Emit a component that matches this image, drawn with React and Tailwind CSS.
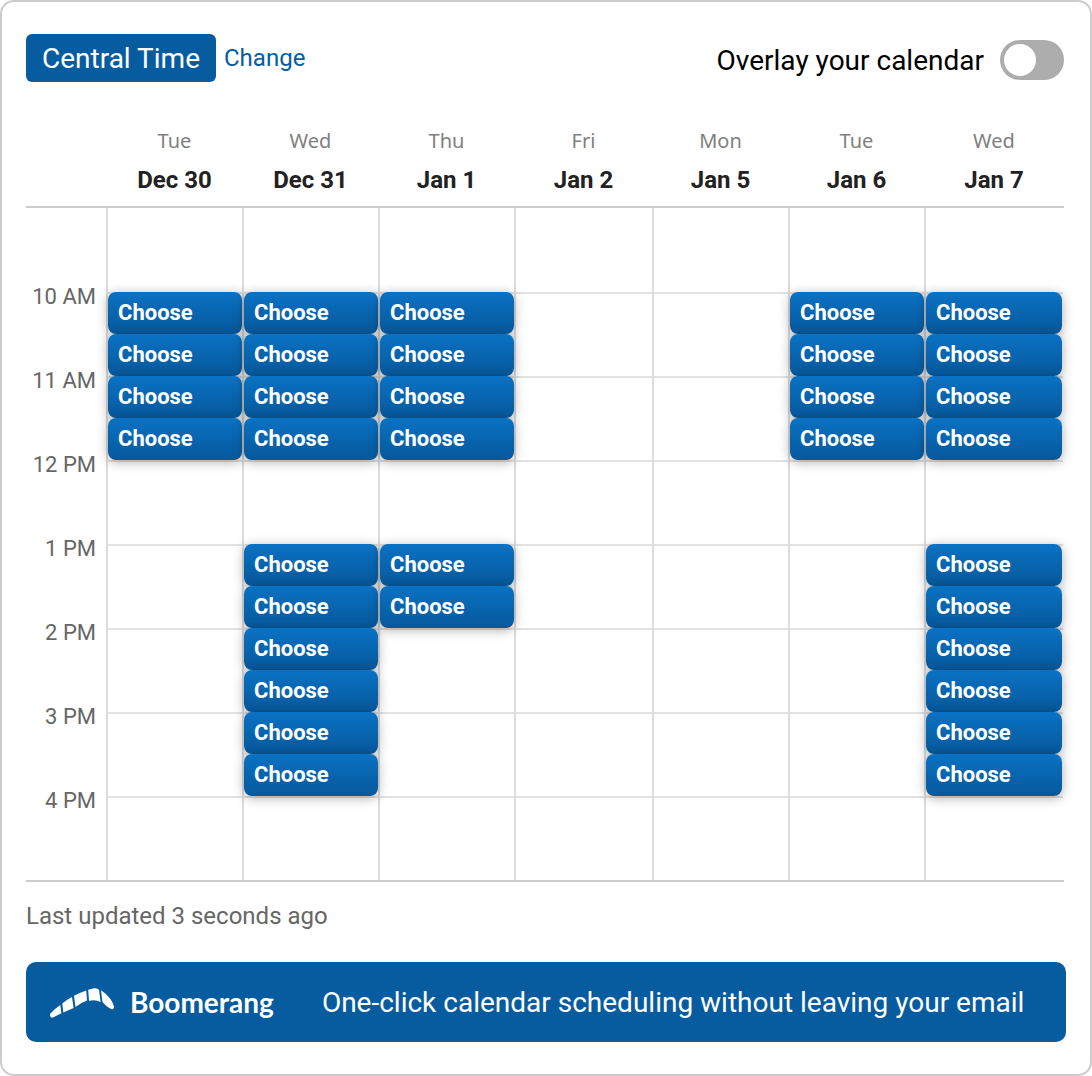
const days = [
  { name: "Tue", date: "Dec 30", slots: [2, 3, 4, 5], w: "w-[136px]", btn: "w-[134px]" },
  { name: "Wed", date: "Dec 31", slots: [2, 3, 4, 5, 8, 9, 10, 11, 12, 13], w: "w-[136px]", btn: "w-[134px]" },
  { name: "Thu", date: "Jan 1", slots: [2, 3, 4, 5, 8, 9], w: "w-[136px]", btn: "w-[134px]" },
  { name: "Fri", date: "Jan 2", slots: [], w: "w-[138px]", btn: "w-[134px]" },
  { name: "Mon", date: "Jan 5", slots: [], w: "w-[136px]", btn: "w-[134px]" },
  { name: "Tue", date: "Jan 6", slots: [2, 3, 4, 5], w: "w-[136px]", btn: "w-[134px]" },
  { name: "Wed", date: "Jan 7", slots: [2, 3, 4, 5, 8, 9, 10, 11, 12, 13], w: "w-[139px]", btn: "w-[136px]" },
];

const hours = ["10 AM", "11 AM", "12 PM", "1 PM", "2 PM", "3 PM", "4 PM"];
const halfHours = Array.from({ length: 16 }, (_, i) => i);

function BoomerangLogo() {
  return (
    <svg className="mt-[2px]" width="64" height="31" viewBox="0 0 64 31" fill="white">
      <path d="M0.3 25.5 Q5 20.5 10.3 17 L11.4 25.3 L3 29.4 Q-0.8 30.2 0.3 25.5Z" />
      <path d="M12.3 15.5 Q17 11.5 22 9 L23.6 20 L13.3 24.5Z" />
      <path d="M24 7.8 Q30 4.5 36.2 2.4 L37 12.6 Q31 14.8 25.5 19Z" />
      <path d="M38.2 1.8 L44 0.2 Q47.8 -0.2 49 1.7 L50.6 14 Q46 11.3 39 12.7Z" />
      <path d="M51 2.3 Q56 5.5 60 10.5 Q62.8 14 64 18.5 Q64 21.4 61.7 21.3 Q58 20 52.5 14Z" />
    </svg>
  );
}

function ChooseButton({ width }) {
  return (
    <button className={`${width} relative z-10 h-[42px] rounded-[8px] bg-gradient-to-b from-[#0a72c4] to-[#07589b] pl-[10px] text-left font-['Roboto',sans-serif] text-[22px] leading-[42px] font-bold text-white shadow-[0_2px_12px_rgba(0,0,0,0.32)]`}>
      Choose
    </button>
  );
}

function DayColumn({ day }) {
  return (
    <div className={`${day.w} shrink-0 border-l-2 border-[#dcdcdc]`}>
      {halfHours.map((i) => (
        <div key={i} className="relative h-[42px]">
          {i % 2 === 1 && i < 15 && (
            <div className="absolute right-0 bottom-[-2px] left-0 h-[2px] bg-[#e2e2e2]" />
          )}
          {day.slots.includes(i) && <ChooseButton width={day.btn} />}
        </div>
      ))}
    </div>
  );
}

export default function App() {
  return (
    <div className="h-[1076px] w-[1092px] rounded-[14px] border-2 border-[#cccccc] bg-white px-[24px] pt-[32px] font-['Roboto',sans-serif]">
      <div className="flex h-[48px] w-[1038px] items-center">
        <div className="flex h-[48px] w-[190px] items-center justify-center rounded-[6px] bg-[#075c9f] pt-[1px] text-[28px] text-white">
          Central Time
        </div>
        <a className="ml-[8px] text-[24px] text-[#075c9f]">Change</a>
        <div className="ml-auto flex items-center">
          <span className="mt-[6px] text-[28px] text-black">Overlay your calendar</span>
          <div className="mt-[4px] ml-[16px] flex h-[40px] w-[64px] items-center rounded-full bg-[#adadad] pl-[4px]">
            <div className="h-[32px] w-[32px] rounded-full bg-white" />
          </div>
        </div>
      </div>

      <div className="mt-[38px] flex h-[88px] w-[1038px] border-b-2 border-[#cccccc] pt-[7px]">
        <div className="w-[80px] shrink-0" />
        {days.map((day) => (
          <div key={day.date + day.name} className={`${day.w} shrink-0 pl-[1px] text-center`}>
            <div className="font-['Noto_Sans',sans-serif] text-[20px] leading-[28px] text-[#808080]">{day.name}</div>
            <div className="mt-[10px] text-[24px] leading-[30px] font-bold text-[#222222]">{day.date}</div>
          </div>
        ))}
      </div>

      <div className="flex w-[1038px] border-b-2 border-[#cccccc]">
        <div className="h-[672px] w-[80px] shrink-0 pt-[77px] pr-[10px] text-right text-[22px] leading-[24px] text-[#666666]">
          {hours.map((h) => (
            <div key={h} className="h-[84px]">
              {h}
            </div>
          ))}
        </div>
        {days.map((day) => (
          <DayColumn key={day.date + day.name} day={day} />
        ))}
      </div>

      <div className="mt-[19px] text-[24px] leading-[30px] text-[#666666]">Last updated 3 seconds ago</div>

      <div className="mt-[31px] flex h-[80px] w-[1040px] items-center rounded-[10px] bg-[#075c9f] pl-[24px] text-white">
        <BoomerangLogo />
        <span className="ml-[16px] font-['Lato',sans-serif] text-[28px] font-bold">Boomerang</span>
        <span className="ml-[48px] pt-[2px] text-[28px]">One-click calendar scheduling without leaving your email</span>
      </div>
    </div>
  );
}
